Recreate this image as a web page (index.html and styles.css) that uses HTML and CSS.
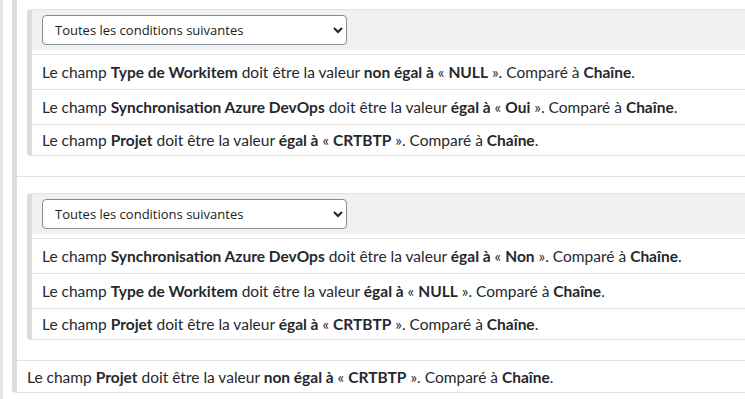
FILE: index.html
```html
<!DOCTYPE html>
<html lang="fr">
<head>
<meta charset="utf-8">
<title>Conditions</title>
<link rel="stylesheet" href="styles.css">
</head>
<body>
<div class="page">
  <div class="rail"></div>
  <div class="outer">
    <div class="item group">
      <div class="card">
        <div class="card-head">
          <select class="mode">
            <option>Toutes les conditions suivantes</option>
            <option>Au moins une des conditions suivantes</option>
          </select>
        </div>
        <ul class="rows">
          <li class="row">Le champ <b>Type de Workitem</b> doit être la valeur <b>non égal à</b> « <b>NULL</b> ». Comparé à <b>Chaîne</b>.</li>
          <li class="row">Le champ <b>Synchronisation Azure DevOps</b> doit être la valeur <b>égal à</b> « <b>Oui</b> ». Comparé à <b>Chaîne</b>.</li>
          <li class="row">Le champ <b>Projet</b> doit être la valeur <b>égal à</b> « <b>CRTBTP</b> ». Comparé à <b>Chaîne</b>.</li>
        </ul>
      </div>
    </div>
    <div class="item group">
      <div class="card">
        <div class="card-head">
          <select class="mode">
            <option>Toutes les conditions suivantes</option>
            <option>Au moins une des conditions suivantes</option>
          </select>
        </div>
        <ul class="rows">
          <li class="row">Le champ <b>Synchronisation Azure DevOps</b> doit être la valeur <b>égal à</b> « <b>Non</b> ». Comparé à <b>Chaîne</b>.</li>
          <li class="row">Le champ <b>Type de Workitem</b> doit être la valeur <b>égal à</b> « <b>NULL</b> ». Comparé à <b>Chaîne</b>.</li>
          <li class="row">Le champ <b>Projet</b> doit être la valeur <b>égal à</b> « <b>CRTBTP</b> ». Comparé à <b>Chaîne</b>.</li>
        </ul>
      </div>
    </div>
    <div class="item single">Le champ <b>Projet</b> doit être la valeur <b>non égal à</b> « <b>CRTBTP</b> ». Comparé à <b>Chaîne</b>.</div>
  </div>
</div>
</body>
</html>
```

FILE: styles.css
```css
html, body {
  margin: 0;
  padding: 0;
  background: #ffffff;
  overflow: hidden;
}

body {
  font-family: Lato, "Noto Sans", "Liberation Sans", sans-serif;
  font-size: 15.5px;
  color: #26282c;
}

.page {
  display: flex;
  align-items: flex-start;
  height: 399px;
}

.rail {
  flex: 0 0 3px;
  align-self: stretch;
  background: #e4e4e4;
}

.outer {
  flex: 1;
  margin-left: 9px;
  margin-top: -7px;
  border-left: 5px solid #dddddd;
  border-bottom: 1px solid #e1e1e1;
  border-bottom-left-radius: 4px;
}

.item {
  border-bottom: 1px solid #e1e1e1;
}

.item:last-child {
  border-bottom: none;
}

.group {
  padding: 16px 0 20px 10px;
}

.single {
  padding: 6px 10px 5px;
  line-height: 20px;
}

.card {
  border-top: 1px solid #e2e2e2;
  border-bottom: 1px solid #e2e2e2;
  border-left: 5px solid #dcdcdc;
  border-radius: 4px 0 0 4px;
}

.card-head {
  background: #eff0f2;
  padding: 5px 10px;
  margin-bottom: 4px;
}

.mode {
  display: block;
  width: 305px;
  height: 30px;
  padding: 0 8px;
  border: 1px solid #878c93;
  border-radius: 4px;
  background: #ffffff;
  color: #222;
  font-family: "Open Sans", "Noto Sans", sans-serif;
  font-size: 13px;
}

.rows {
  list-style: none;
  margin: 0;
  padding: 0;
}

.row {
  border-top: 1px solid #e1e1e1;
  padding: 7px 10px 7px;
  line-height: 20px;
}

.row:last-child {
  padding: 5px 10px 5px;
}

b {
  font-weight: 700;
}
```
